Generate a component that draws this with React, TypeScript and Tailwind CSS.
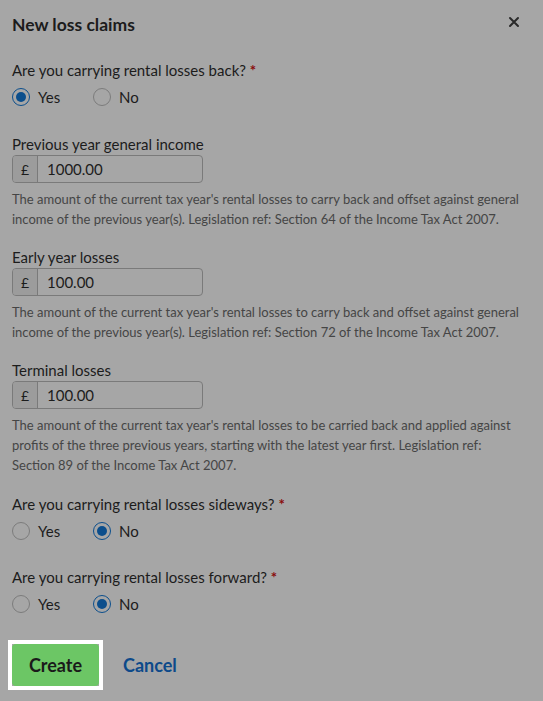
import React from 'react';

function Radio({ label, checked }: { label: string; checked?: boolean }) {
  return (
    <label className="flex items-center gap-2">
      <span
        className={`flex h-[18px] w-[18px] items-center justify-center rounded-full border ${
          checked ? 'border-[#0b4e8c]' : 'border-[#7c7c7c]'
        }`}
      >
        {checked && <span className="h-[10px] w-[10px] rounded-full bg-[#0b4e8c]" />}
      </span>
      <span className="text-[15px] leading-[20px]">{label}</span>
    </label>
  );
}

function Question({ text, yes, className }: { text: string; yes: boolean; className: string }) {
  return (
    <div className={className}>
      <div className="text-[15px] leading-[20px]">
        {text} <span className="font-bold text-[#8a0b0b]">*</span>
      </div>
      <div className="mt-[7px] flex h-[20px] gap-[17px]">
        <div className="w-[64px]">
          <Radio label="Yes" checked={yes} />
        </div>
        <Radio label="No" checked={!yes} />
      </div>
    </div>
  );
}

function MoneyField({ label, value, help, className }: { label: string; value: string; help: string; className: string }) {
  return (
    <div className={className}>
      <div className="text-[15px] leading-[20px]">{label}</div>
      <div className="mt-px flex h-[28px] w-[191px] overflow-hidden rounded-[4px] border border-[#7a7a7a]">
        <span className="flex w-[25px] items-center justify-center border-r border-[#7a7a7a] bg-[#9c9c9c] text-[14px]">£</span>
        <span className="flex items-center pl-[9px] text-[15px]">{value}</span>
      </div>
      <p className="mt-[6px] max-w-[511px] text-[13px] leading-[20px] text-[#454545]">{help}</p>
    </div>
  );
}

export default function App() {
  return (
    <div className="min-h-[701px] w-full bg-[#a6a6a6] px-3 pt-[14px] text-[#1c1c1c]" style={{ fontFamily: 'Lato, "Open Sans", sans-serif' }}>
      <div className="flex items-center justify-between">
        <h2 className="text-[17.5px] font-bold leading-[22px]">New loss claims</h2>
        <svg width="12" height="12" viewBox="0 0 12 12" className="mr-[11px] -mt-[7px]" stroke="#2a2a2a" strokeWidth="2" strokeLinecap="round">
          <path d="M2 2 L10 10 M10 2 L2 10" />
        </svg>
      </div>

      <Question className="mt-[24px]" text="Are you carrying rental losses back?" yes={true} />

      <MoneyField
        className="mt-[27px]"
        label="Previous year general income"
        value="1000.00"
        help="The amount of the current tax year's rental losses to carry back and offset against general income of the previous year(s). Legislation ref: Section 64 of the Income Tax Act 2007."
      />
      <MoneyField
        className="mt-[18px]"
        label="Early year losses"
        value="100.00"
        help="The amount of the current tax year's rental losses to carry back and offset against general income of the previous year(s). Legislation ref: Section 72 of the Income Tax Act 2007."
      />
      <MoneyField
        className="mt-[18px]"
        label="Terminal losses"
        value="100.00"
        help="The amount of the current tax year's rental losses to be carried back and applied against profits of the three previous years, starting with the latest year first. Legislation ref: Section 89 of the Income Tax Act 2007."
      />

      <Question className="mt-[19px]" text="Are you carrying rental losses sideways?" yes={false} />
      <Question className="mt-[26px]" text="Are you carrying rental losses forward?" yes={false} />

      <div className="mt-[26px] flex items-center gap-[20px]">
        <div className="-ml-1 border-4 border-white">
          <button className="h-[42px] w-[87px] rounded-[4px] bg-[#6cc665] text-[18px] font-bold text-[#1a1a1a]">Create</button>
        </div>
        <button className="text-[18px] font-bold text-[#0d4a8a]">Cancel</button>
      </div>
    </div>
  );
}
